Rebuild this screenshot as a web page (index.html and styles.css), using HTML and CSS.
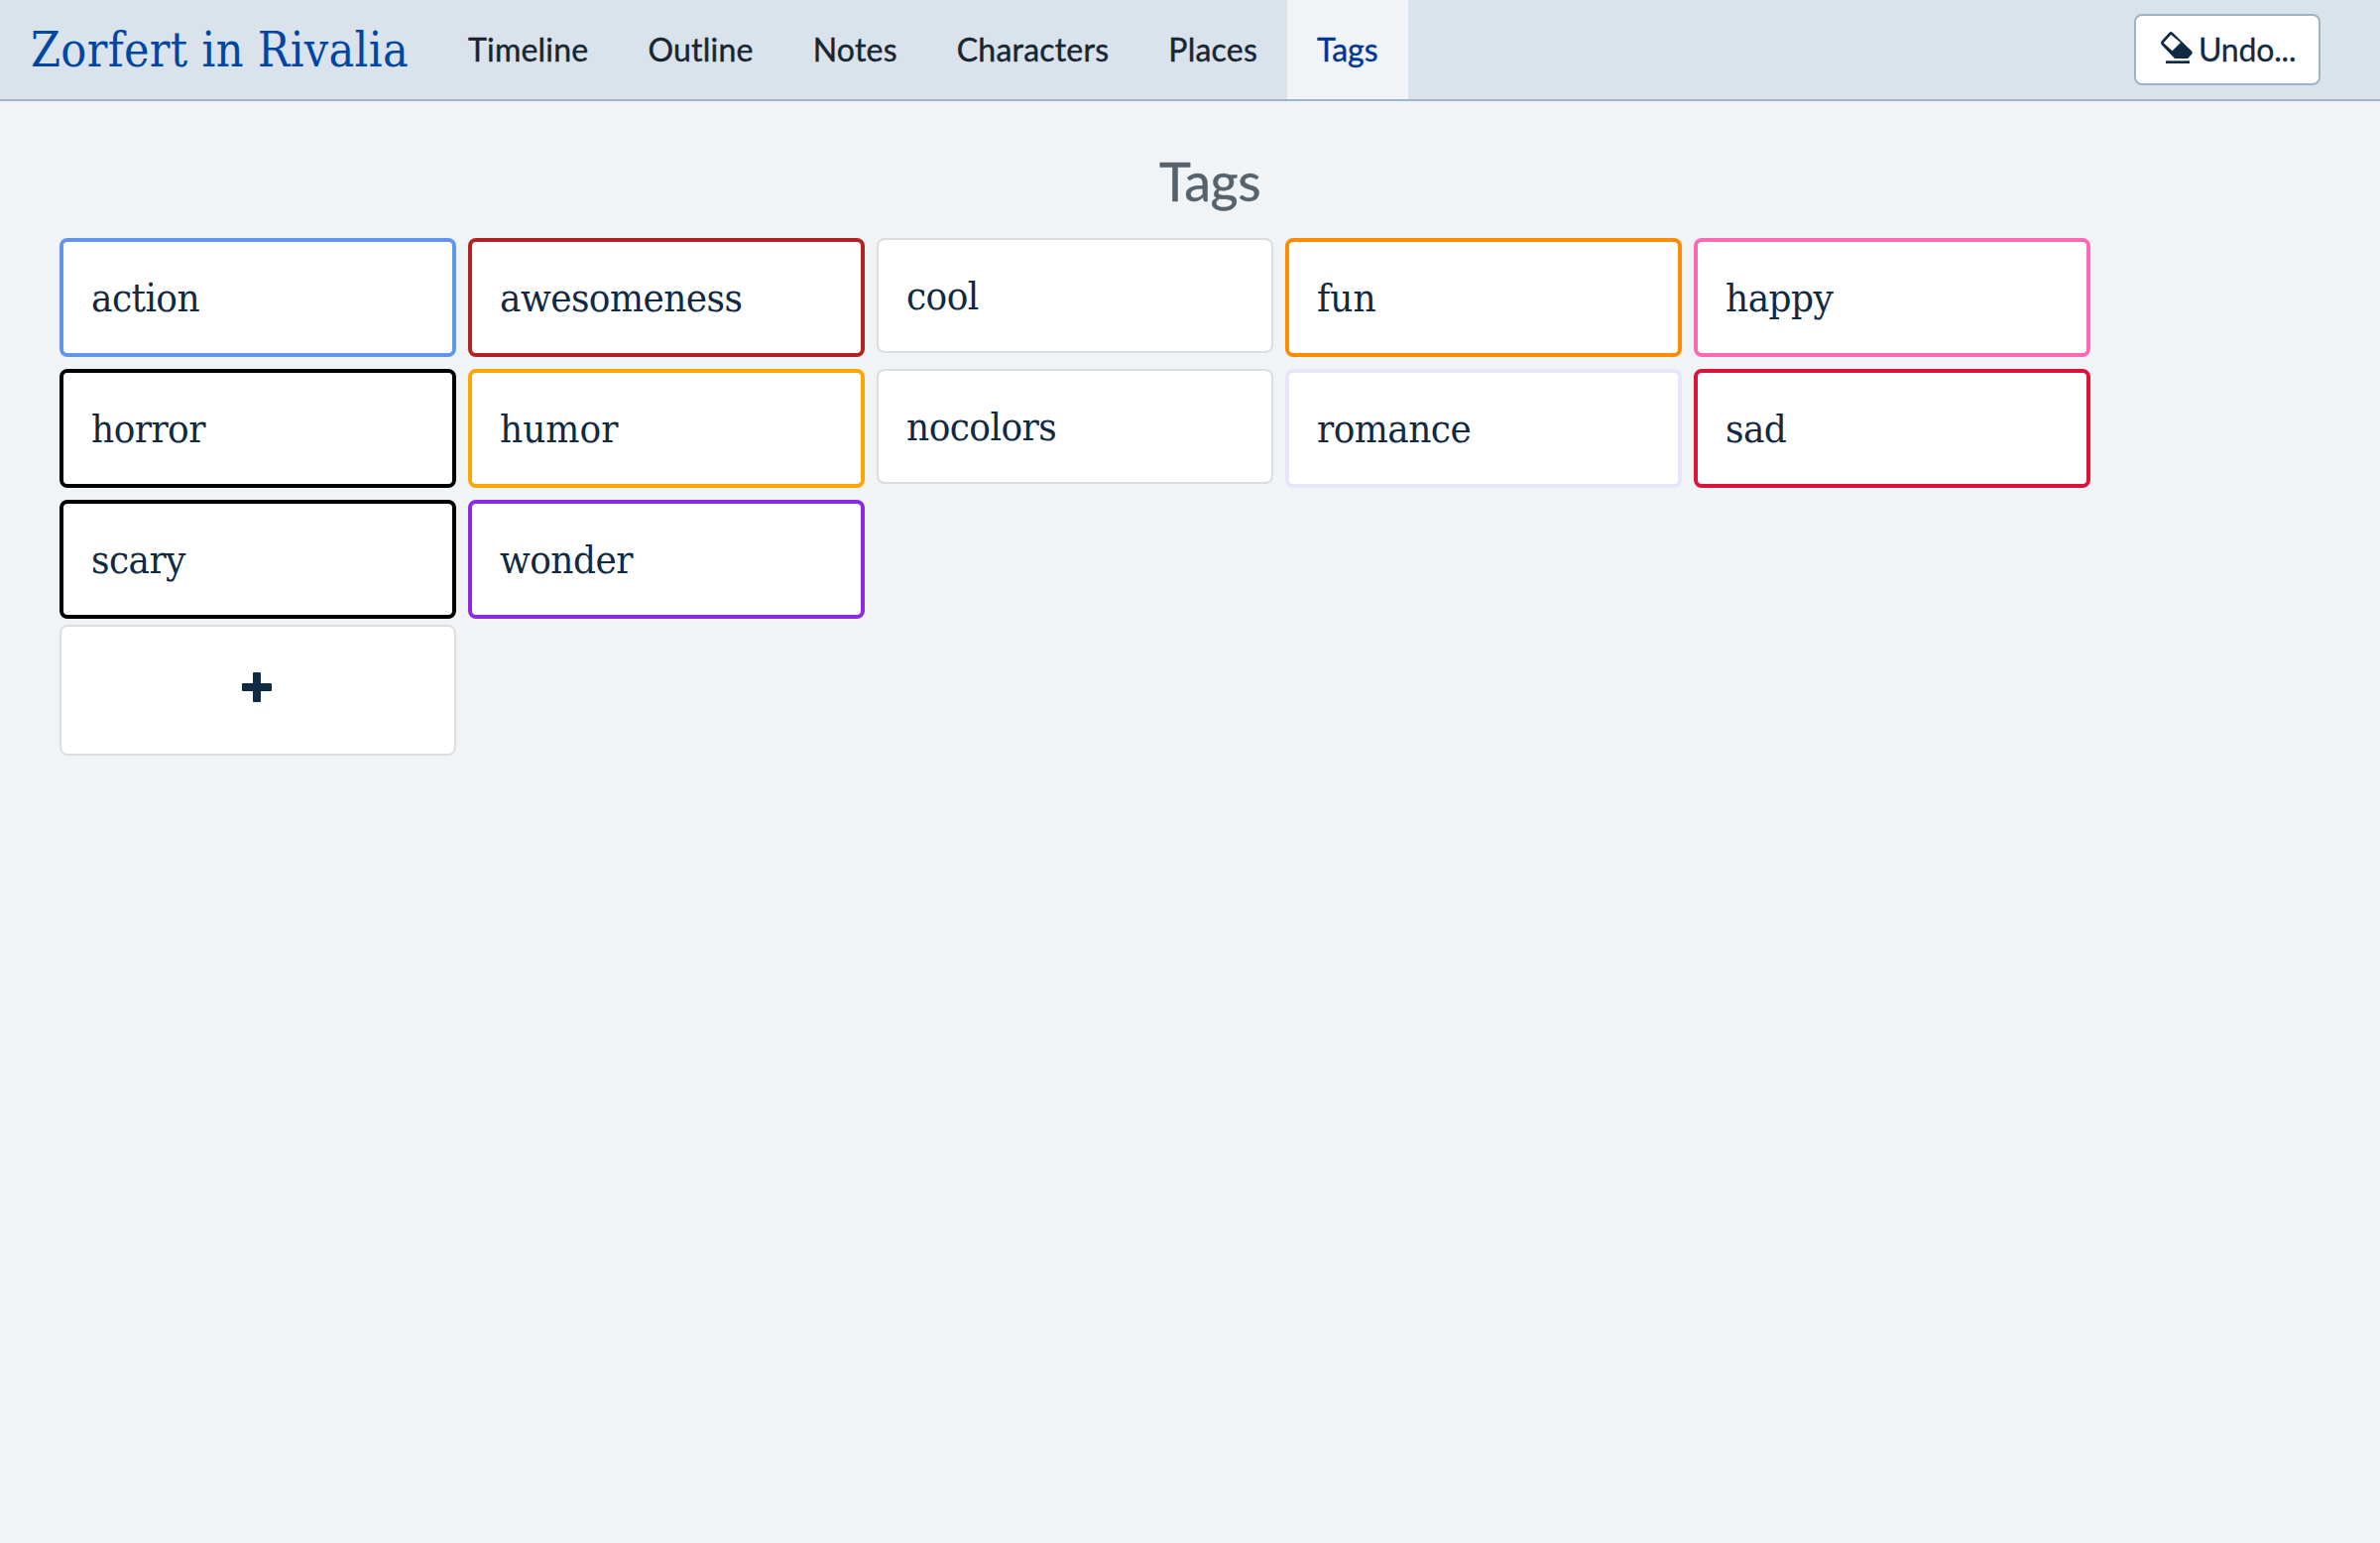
FILE: index.html
```html
<!DOCTYPE html>
<html lang="en">
<head>
<meta charset="utf-8">
<title>Zorfert in Rivalia - Tags</title>
<link rel="stylesheet" href="styles.css">
</head>
<body>
<nav class="navbar">
  <a class="brand">Zorfert in Rivalia</a>
  <ul class="nav">
    <li class="nav-item">Timeline</li>
    <li class="nav-item">Outline</li>
    <li class="nav-item">Notes</li>
    <li class="nav-item">Characters</li>
    <li class="nav-item">Places</li>
    <li class="nav-item active">Tags</li>
  </ul>
  <button class="undo" type="button">
    <svg class="undo-icon" viewBox="0 0 34 38" aria-hidden="true">
      <path fill="currentColor" fill-rule="evenodd" d="M9.600 1.700Q11.200.3 12.800 1.700L32.300 20.700Q33.400 22 32.300 23.500L28.200 28H15L1.600 14Q.4 12.400 1.600 10.600ZM11.200 3.900L3.700 12.200L12.500 20.300L20.900 12Z"/>
      <path fill="currentColor" d="M6 30.300H30V33H6Z"/>
    </svg>
    <span>Undo...</span>
  </button>
</nav>
<main class="content">
  <h1 class="title">Tags</h1>
  <div class="tags">
    <div class="card cornflower">action</div>
    <div class="card firebrick">awesomeness</div>
    <div class="card">cool</div>
    <div class="card darkorange loose">fun</div>
    <div class="card hotpink">happy</div>
    <div class="card black">horror</div>
    <div class="card orange loose">humor</div>
    <div class="card">nocolors</div>
    <div class="card lavender">romance</div>
    <div class="card crimson">sad</div>
    <div class="card black">scary</div>
    <div class="card blueviolet">wonder</div>
  </div>
  <div class="new-tag">
    <svg class="plus" viewBox="0 0 30 30" aria-hidden="true"><path fill="currentColor" d="M12 0H18Q19 0 19 1V11H29Q30 11 30 12V18Q30 19 29 19H19V29Q19 30 18 30H12Q11 30 11 29V19H1Q0 19 0 18V12Q0 11 1 11H11V1Q11 0 12 0Z"/></svg>
  </div>
</main>
</body>
</html>
```
FILE: styles.css
```css
* { box-sizing: border-box; }
body {
  margin: 0;
  background: #f0f4f7;
  color: #102a43;
  font-family: Lato, sans-serif;
  font-size: 32px;
}
.navbar {
  display: flex;
  align-items: stretch;
  height: 102px;
  padding-right: 60px;
  background: #dae2eb;
  border-bottom: 2px solid #9fb3c8;
}
.brand {
  display: flex;
  align-items: center;
  width: 442px;
  padding-left: 31px;
  color: #0047a5;
  font: 48px "DejaVu Serif Condensed", "DejaVu Serif", serif;
  font-stretch: condensed;
  letter-spacing: 0.33px;
  white-space: nowrap;
}
.nav {
  display: flex;
  margin: 0;
  padding: 0;
  list-style: none;
  color: #172530;
  letter-spacing: 0.22px;
}
.nav-item {
  display: flex;
  align-items: center;
  padding: 0 30px 1px;
  -webkit-text-stroke: 0.4px currentColor;
}
.nav-item.active {
  background: #f0f4f7;
  color: #003790;
  letter-spacing: 0;
}
.undo {
  display: flex;
  align-items: center;
  align-self: center;
  gap: 5px;
  width: 188px;
  height: 72px;
  margin-left: auto;
  padding: 0 0 0 24px;
  border: 2px solid #9fb3c8;
  border-radius: 8px;
  background: #fff;
  color: #102a43;
  font: inherit;
  letter-spacing: -0.2px;
  -webkit-text-stroke: 0.3px currentColor;
}
.undo span { padding-bottom: 1px; }
.undo-icon { width: 34px; height: 38px; }
.content { padding: 48px 0 0 60px; }
.title {
  margin: 0 20px 0 0;
  height: 90px;
  color: #56636d;
  font-size: 54px;
  font-weight: 400;
  letter-spacing: -0.5px;
  line-height: 65px;
  text-align: center;
  -webkit-text-stroke: 0.4px currentColor;
}
.tags {
  display: grid;
  grid-template-columns: repeat(5, 400px);
  gap: 12px;
  align-items: start;
}
.card {
  padding: 28px;
  border: 2px solid #ddd;
  border-radius: 8px;
  background: #fff;
  font: 40px/56px "DejaVu Serif Condensed", "DejaVu Serif", serif;
  font-stretch: condensed;
  letter-spacing: -0.55px;
}
.card.loose { letter-spacing: 0; }
.cornflower, .firebrick, .darkorange, .hotpink, .black, .orange,
.lavender, .crimson, .blueviolet { border-width: 4px; }
.cornflower { border-color: cornflowerblue; }
.firebrick { border-color: firebrick; }
.darkorange { border-color: darkorange; }
.hotpink { border-color: hotpink; }
.black { border-color: black; }
.orange { border-color: orange; }
.lavender { border-color: lavender; }
.crimson { border-color: crimson; }
.blueviolet { border-color: blueviolet; }
.new-tag {
  display: flex;
  align-items: center;
  justify-content: center;
  width: 400px;
  height: 132px;
  margin-top: 6px;
  padding: 0 2px 6px 0;
  border: 2px solid #ddd;
  border-radius: 8px;
  background: #fff;
}
.plus { width: 30px; height: 30px; }
```
